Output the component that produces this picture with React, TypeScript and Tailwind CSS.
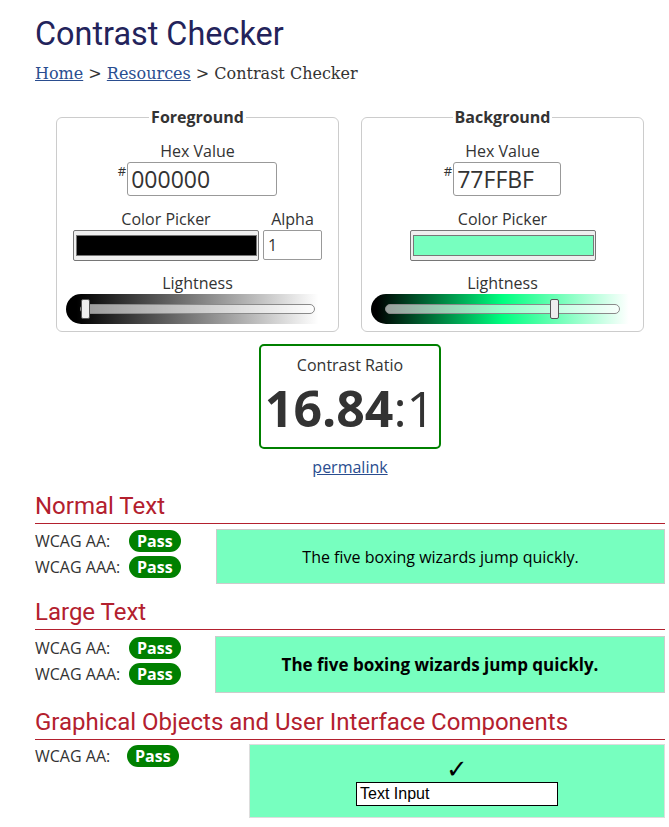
const sans = "font-['Open_Sans',sans-serif]";

function Slider({ gradient, pos }: { gradient: string; pos: number }) {
  return (
    <div
      className="h-[30px] rounded-l-[15px] flex items-center px-[14px]"
      style={{ background: gradient }}
    >
      <div className="relative h-[10px] flex-1 rounded-full border border-[#8a8a8a] bg-white/60">
        <div
          className="absolute top-[-6px] h-[20px] w-[9px] rounded-[2px] border border-[#555] bg-[#eeeeee]"
          style={{ left: `calc(${pos}% - ${pos * 0.09}px)` }}
        />
      </div>
    </div>
  );
}

function ColorPicker({ color, width }: { color: string; width: string }) {
  return (
    <div className={`${width} h-[31px] rounded-[2px] border border-[#767676] bg-[#efefef] pl-[2px] pr-[1px] py-[4px]`}>
      <div className="h-full border border-[#777]" style={{ background: color }} />
    </div>
  );
}

function Panel({
  title,
  hex,
  hexWidth,
  color,
  alpha,
  gradient,
  pos,
}: {
  title: string;
  hex: string;
  hexWidth: string;
  color: string;
  alpha: boolean;
  gradient: string;
  pos: number;
}) {
  return (
    <fieldset className="w-[283px] rounded-[6px] border border-[#cccccc] px-[9px] pb-[7px] text-center">
      <legend className="mx-auto px-[2px] text-[16px] font-bold leading-[22px] text-[#333]">{title}</legend>
      <div className="pt-[12px] text-[16px] leading-[22px]">Hex Value</div>
      <div className="flex justify-center">
        <span className="mt-[2px] mr-[1px] text-[13px] leading-[14px]">#</span>
        <div className={`${hexWidth} h-[34px] rounded-[3px] border border-[#999] bg-white pl-[3px] text-left text-[23px] leading-[32px] text-[#333]`}>
          {hex}
        </div>
      </div>
      <div className="mt-[12px] flex justify-center gap-[4px]">
        <div className="flex flex-col items-center">
          <div className="text-[16px] leading-[22px]">Color Picker</div>
          <ColorPicker color={color} width="w-[186px]" />
        </div>
        {alpha && (
          <div className="flex flex-col items-center">
            <div className="text-[16px] leading-[22px]">Alpha</div>
            <div className="h-[30px] w-[59px] rounded-[2px] border border-[#999] bg-white pl-[4px] text-left text-[16px] leading-[28px]">
              1
            </div>
          </div>
        )}
      </div>
      <div className="mt-[11px] text-[16px] leading-[22px]">Lightness</div>
      <Slider gradient={gradient} pos={pos} />
    </fieldset>
  );
}

function Pass() {
  return (
    <span className="inline-block rounded-full bg-[#008000] px-[8px] text-[16px] font-bold leading-[22px] text-white">
      Pass
    </span>
  );
}

function Heading({ children }: { children: string }) {
  return (
    <h2 className="border-b border-[#b3202e] pb-[3px] font-['Roboto',sans-serif] text-[24px] leading-[28px] text-[#b3202e]">
      {children}
    </h2>
  );
}

function Results({ labelW }: { labelW: string }) {
  return (
    <div className="flex flex-col gap-[4px] pt-[1px]">
      <div className="flex items-center">
        <span className={`${labelW} text-[16px] leading-[22px]`}>WCAG AA:</span>
        <Pass />
      </div>
      <div className="flex items-center">
        <span className={`${labelW} text-[16px] leading-[22px]`}>WCAG AAA:</span>
        <Pass />
      </div>
    </div>
  );
}

export default function App() {
  return (
    <div className={`${sans} min-h-[827px] bg-white pl-[35px] pr-[4px] pt-[14px] text-[#333]`}>
      <h1 className="font-['Roboto',sans-serif] text-[32.4px] leading-[40px] text-[#23235b]">Contrast Checker</h1>
      <nav className="mt-[8px] font-['DejaVu_Serif',serif] text-[16px] leading-[24px] text-[#333]">
        <a href="#" className="text-[#2a4d8f] underline">Home</a> &gt;{" "}
        <a href="#" className="text-[#2a4d8f] underline">Resources</a> &gt; Contrast Checker
      </nav>

      <div className="mt-[20px] flex justify-center gap-[22px]">
        <Panel
          title="Foreground"
          hex="000000"
          hexWidth="w-[150px]"
          color="#000000"
          alpha
          gradient="linear-gradient(to right, #000 4%, #fff 96%)"
          pos={0}
        />
        <Panel
          title="Background"
          hex="77FFBF"
          hexWidth="w-[108px]"
          color="#77FFBF"
          alpha={false}
          gradient="linear-gradient(to right, #000 2%, #00ff80 50%, #fff 98%)"
          pos={73.3}
        />
      </div>

      <div className="mt-[12px] flex flex-col items-center">
        <div className="w-[182px] rounded-[5px] border-2 border-[#008000] pt-[8px] pb-[7px] text-center">
          <div className="text-[16px] leading-[22px]">Contrast Ratio</div>
          <div className="text-[50px] leading-[64px] text-[#333]">
            <span className="font-bold">16.84</span>:1
          </div>
        </div>
        <a href="#" className="mt-[7px] text-[16px] leading-[22px] text-[#2a4d8f] underline">permalink</a>
      </div>

      <section className="mt-[14px]">
        <Heading>Normal Text</Heading>
        <div className="mt-[5px] flex">
          <div className="w-[181px]">
            <Results labelW="w-[94px]" />
          </div>
          <div className="flex h-[55px] flex-1 items-center justify-center border border-[#cccccc] bg-[#77FFBF] text-[16px] text-black">
            The five boxing wizards jump quickly.
          </div>
        </div>
      </section>

      <section className="mt-[14px]">
        <Heading>Large Text</Heading>
        <div className="mt-[6px] flex">
          <div className="w-[180px]">
            <Results labelW="w-[94px]" />
          </div>
          <div className="flex h-[57px] flex-1 items-center justify-center border border-[#cccccc] bg-[#77FFBF] text-[17px] font-bold text-black">
            The five boxing wizards jump quickly.
          </div>
        </div>
      </section>

      <section className="mt-[15px]">
        <Heading>Graphical Objects and User Interface Components</Heading>
        <div className="mt-[4px] flex">
          <div className="flex w-[214px] items-start pt-[1px]">
            <span className="w-[92px] text-[16px] leading-[22px]">WCAG AA:</span>
            <Pass />
          </div>
          <div className="flex h-[74px] flex-1 flex-col items-center border border-[#dddddd] bg-[#77FFBF] pt-[9px]">
            <div className="text-[26px] leading-[28px] text-black">✓</div>
            <div className="h-[24px] w-[202px] border border-black bg-white pl-[3px] font-['Liberation_Sans',sans-serif] text-[16px] leading-[22px] text-black">
              Text Input
            </div>
          </div>
        </div>
      </section>
    </div>
  );
}
